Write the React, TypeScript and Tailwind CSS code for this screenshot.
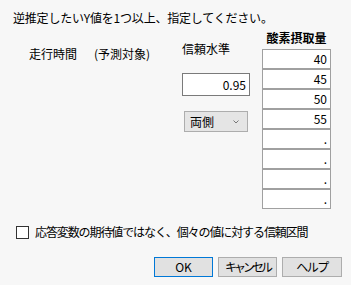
// Inverse prediction dialog (JMP-style)

const rows = ['40', '45', '50', '55', '.', '.', '.', '.']

const font = { fontFamily: '"Noto Sans CJK JP", "Noto Sans", sans-serif' }

export default function App() {
  return (
    <div
      className="w-[351px] h-[285px] bg-[#f7f7f7] text-[12px] text-black overflow-hidden"
      style={font}
    >
      {/* TITLE */}
      <p className="pl-[13px] pt-[10px] leading-[16px] tracking-[-0.2px]">
        逆推定したいY値を1つ以上、指定してください。
      </p>

      {/* MAIN ROW */}
      <div className="flex mt-[4px]">
        {/* LEFT LABELS */}
        <div className="w-[182px] flex pl-[29px] pt-[16px] gap-[17px] leading-[16px]">
          <span>走行時間</span>
          <span>(予測対象)</span>
        </div>

        {/* CONFIDENCE */}
        <div className="w-[80px] flex flex-col pt-[11px]">
          <span className="leading-[16px]">信頼水準</span>
          <div className="mt-[16px] w-[68px] h-[23px] border border-[#7a7a7a] bg-white flex items-center justify-end pr-[3px] leading-none">
            0.95
          </div>
          <div className="mt-[15px] ml-[2px] w-[64px] h-[21px] border border-[#adadad] bg-[#e5e5e5] flex items-center justify-between pl-[5px] pr-[8px] leading-none">
            <span>両側</span>
            <svg width="6" height="4" viewBox="0 0 6 4">
              <path d="M0.5 0.5 L3 3 L5.5 0.5" fill="none" stroke="#777" strokeWidth="1" />
            </svg>
          </div>
        </div>

        {/* VALUES */}
        <div className="w-[69px] flex flex-col">
          <span className="leading-[16px] font-bold text-center">酸素摂取量</span>
          <div className="mt-[3px] flex flex-col">
            {rows.map((v, i) => (
              <div
                key={i}
                className="h-[20px] border border-[#a0a0a0] bg-white flex items-center justify-end pr-[3px] leading-none"
              >
                {v}
              </div>
            ))}
          </div>
        </div>
      </div>

      {/* CHECKBOX */}
      <div className="flex items-center mt-[15px] pl-[16px] gap-[6px]">
        <div className="w-[13px] h-[13px] border border-[#333] bg-white" />
        <span className="leading-[16px] tracking-[-1.1px] whitespace-nowrap">
          応答変数の期待値ではなく、個々の値に対する信頼区間
        </span>
      </div>

      {/* BUTTONS */}
      <div className="flex justify-end gap-[5px] pr-[9px] mt-[17px]">
        <button className="w-[59px] h-[20px] border border-[#0078d7] bg-[#e1e1e1] leading-none whitespace-nowrap">
          OK
        </button>
        <button className="w-[59px] h-[20px] border border-[#adadad] bg-[#e1e1e1] leading-none whitespace-nowrap tracking-[-3px]">
          キャンセル
        </button>
        <button className="w-[60px] h-[20px] border border-[#adadad] bg-[#e1e1e1] leading-none whitespace-nowrap tracking-[-1.5px]">
          ヘルプ
        </button>
      </div>
    </div>
  )
}
